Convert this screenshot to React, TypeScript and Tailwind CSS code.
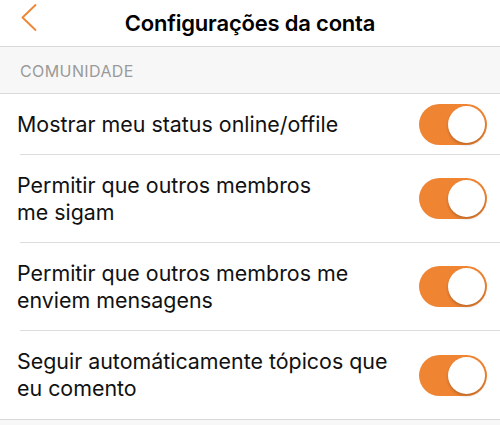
import React, { useState } from "react";

const rows = [
  { id: "status", label: ["Mostrar meu status online/offile"] },
  { id: "follow", label: ["Permitir que outros membros", "me sigam"] },
  { id: "messages", label: ["Permitir que outros membros me", "enviem mensagens"] },
  { id: "topics", label: ["Seguir automáticamente tópicos que", "eu comento"] },
];

const Toggle = ({ on, onClick }: { on: boolean; onClick: () => void }) => (
  <button
    onClick={onClick}
    className={`relative h-[41px] w-[68px] shrink-0 rounded-full transition-colors ${
      on ? "bg-[#ef8433]" : "bg-[#e5e5e5]"
    }`}
  >
    <span
      className={`absolute top-[2px] h-[37px] w-[37px] rounded-full bg-white shadow-[0_2px_3px_rgba(0,0,0,0.2)] transition-all ${
        on ? "left-[29px]" : "left-[2px]"
      }`}
    />
  </button>
);

export default function App() {
  const [values, setValues] = useState<Record<string, boolean>>({
    status: true,
    follow: true,
    messages: true,
    topics: true,
  });

  return (
    <div className="h-[425px] w-[500px] overflow-hidden bg-[#f7f7f7] font-['Inter',sans-serif] text-black">
      {/* Header */}
      <div className="relative flex h-[47px] items-center justify-center border-b border-[#d9d9d9] bg-white">
        <button className="absolute left-[19px] top-[3px] text-[#ef8433]">
          <svg width="20" height="28" viewBox="0 0 20 28" fill="none">
            <path d="M16.5 2 L3.5 14.5 L16.5 27" stroke="currentColor" strokeWidth="1.8" strokeLinecap="round" strokeLinejoin="round" />
          </svg>
        </button>
        <h1 className="text-[22px] font-semibold tracking-[-0.2px]">Configurações da conta</h1>
      </div>

      {/* Section */}
      <div className="flex h-[46px] items-end px-5 pb-[10px] text-[16px] tracking-[0.4px] text-[#9a9a9a]">COMUNIDADE</div>

      <div className="border-y border-[#d9d9d9] bg-white">
        {rows.map((row, i) => (
          <div key={row.id} className="pl-5">
            <div
              className={`flex items-center justify-between pr-[13px] ${
                row.label.length > 1 ? "h-[88px]" : "h-[61px]"
              } ${i < rows.length - 1 ? "border-b border-[#dcdcdc]" : ""}`}
            >
              <p className="-ml-[3px] text-[21.4px] leading-[27px] text-[#111]">
                {row.label.map((l) => (
                  <span key={l} className="block">
                    {l}
                  </span>
                ))}
              </p>
              <Toggle
                on={values[row.id]}
                onClick={() => setValues((v) => ({ ...v, [row.id]: !v[row.id] }))}
              />
            </div>
          </div>
        ))}
      </div>
    </div>
  );
}
